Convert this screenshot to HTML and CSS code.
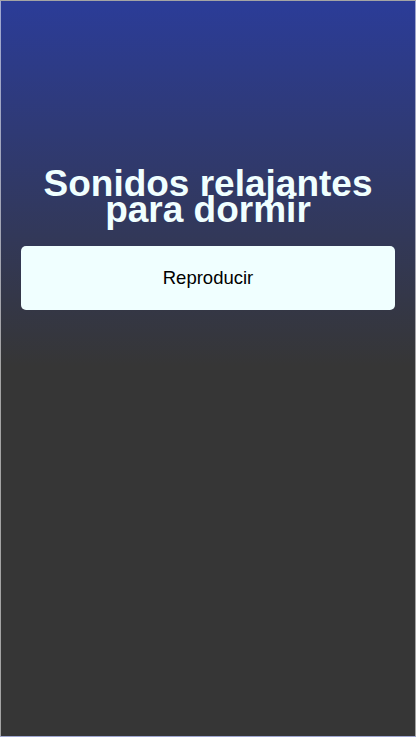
FILE: index.html
```html
<!DOCTYPE html>
<html lang="es">
<head>
    <meta charset="UTF-8">
    <meta name="viewport" content="width=device-width, initial-scale=1.0">
    <title>Sonidos relajantes para dormir</title>
    <link rel="stylesheet" href="styles.css">
</head>
<body>
    <div class="screen">
        <h1 class="title">Sonidos relajantes para dormir</h1>
        <button class="play-btn">Reproducir</button>
    </div>
</body>
</html>
```

FILE: styles.css
```css
/* Pantalla principal */
* {
    box-sizing: border-box;
}

body {
    margin: 0;
    background-color: #363636;
    font-family: "Liberation Sans", Arial, sans-serif;
}

.screen {
    display: flex;
    flex-direction: column;
    min-height: 100vh;
    padding: 170px 20px 0;
    border: 1px solid rgba(255, 255, 255, 0.55);
    background: linear-gradient(to bottom, #2b3c98 0px, #363636 365px, #363636 100%);
}

.title {
    margin: 0 0 23px;
    color: azure;
    font-size: 37px;
    font-weight: bold;
    line-height: 26px;
    text-align: center;
}

.play-btn {
    height: 64px;
    border: none;
    border-radius: 5px;
    background: azure;
    color: black;
    font-family: inherit;
    font-size: 18.5px;
}
```
